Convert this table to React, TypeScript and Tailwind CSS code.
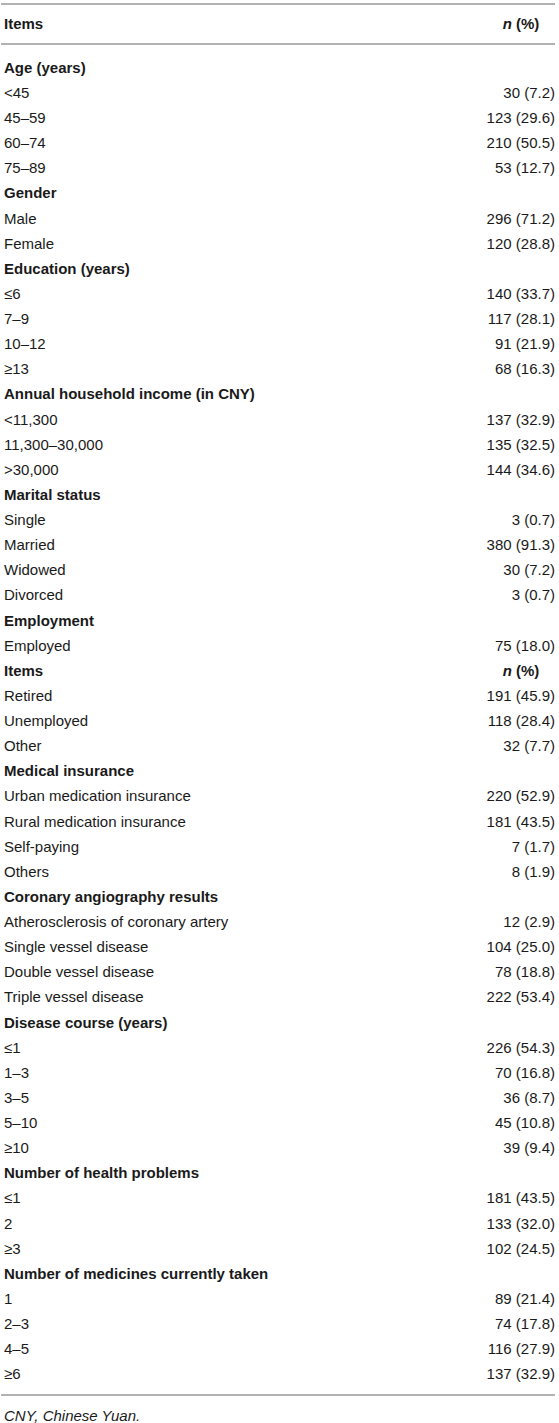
type Row = { label: string; value?: string; kind?: 'group' | 'header' };

const rows: Row[] = [
  { label: 'Age (years)', kind: 'group' },
  { label: '<45', value: '30 (7.2)' },
  { label: '45–59', value: '123 (29.6)' },
  { label: '60–74', value: '210 (50.5)' },
  { label: '75–89', value: '53 (12.7)' },
  { label: 'Gender', kind: 'group' },
  { label: 'Male', value: '296 (71.2)' },
  { label: 'Female', value: '120 (28.8)' },
  { label: 'Education (years)', kind: 'group' },
  { label: '≤6', value: '140 (33.7)' },
  { label: '7–9', value: '117 (28.1)' },
  { label: '10–12', value: '91 (21.9)' },
  { label: '≥13', value: '68 (16.3)' },
  { label: 'Annual household income (in CNY)', kind: 'group' },
  { label: '<11,300', value: '137 (32.9)' },
  { label: '11,300–30,000', value: '135 (32.5)' },
  { label: '>30,000', value: '144 (34.6)' },
  { label: 'Marital status', kind: 'group' },
  { label: 'Single', value: '3 (0.7)' },
  { label: 'Married', value: '380 (91.3)' },
  { label: 'Widowed', value: '30 (7.2)' },
  { label: 'Divorced', value: '3 (0.7)' },
  { label: 'Employment', kind: 'group' },
  { label: 'Employed', value: '75 (18.0)' },
  { label: 'Items', kind: 'header' },
  { label: 'Retired', value: '191 (45.9)' },
  { label: 'Unemployed', value: '118 (28.4)' },
  { label: 'Other', value: '32 (7.7)' },
  { label: 'Medical insurance', kind: 'group' },
  { label: 'Urban medication insurance', value: '220 (52.9)' },
  { label: 'Rural medication insurance', value: '181 (43.5)' },
  { label: 'Self-paying', value: '7 (1.7)' },
  { label: 'Others', value: '8 (1.9)' },
  { label: 'Coronary angiography results', kind: 'group' },
  { label: 'Atherosclerosis of coronary artery', value: '12 (2.9)' },
  { label: 'Single vessel disease', value: '104 (25.0)' },
  { label: 'Double vessel disease', value: '78 (18.8)' },
  { label: 'Triple vessel disease', value: '222 (53.4)' },
  { label: 'Disease course (years)', kind: 'group' },
  { label: '≤1', value: '226 (54.3)' },
  { label: '1–3', value: '70 (16.8)' },
  { label: '3–5', value: '36 (8.7)' },
  { label: '5–10', value: '45 (10.8)' },
  { label: '≥10', value: '39 (9.4)' },
  { label: 'Number of health problems', kind: 'group' },
  { label: '≤1', value: '181 (43.5)' },
  { label: '2', value: '133 (32.0)' },
  { label: '≥3', value: '102 (24.5)' },
  { label: 'Number of medicines currently taken', kind: 'group' },
  { label: '1', value: '89 (21.4)' },
  { label: '2–3', value: '74 (17.8)' },
  { label: '4–5', value: '116 (27.9)' },
  { label: '≥6', value: '137 (32.9)' },
];

function NHeader() {
  return (
    <span className="font-bold">
      <i>n</i> (%)
    </span>
  );
}

export default function App() {
  return (
    <div className="w-[559px] bg-white pt-[3px] text-[15px] text-[#1a1a1a] font-['Liberation_Sans',Arial,sans-serif]">
      <div className="ml-px w-[554px]">
        <div className="h-[2px] bg-[#b2b2b2]" />
        <div className="flex h-[38px] items-center pl-[3px]">
          <span className="flex-1 font-bold">Items</span>
          <span className="w-[68px] text-center">
            <NHeader />
          </span>
        </div>
        <div className="h-[2px] bg-[#b2b2b2]" />

        <div className="pt-[10.5px] pb-[6.6px]">
          {rows.map((r, i) => (
            <div key={i} className="flex h-[25.13px] items-center pl-[3px]">
              <span className={r.kind ? 'flex-1 font-bold' : 'flex-1'}>{r.label}</span>
              {r.kind === 'header' ? (
                <span className="w-[68px] text-center">
                  <NHeader />
                </span>
              ) : (
                <span className="text-right">{r.value}</span>
              )}
            </div>
          ))}
        </div>

        <div className="h-[2px] bg-[#b2b2b2]" />
        <div className="pl-[3px] pt-[11px] italic leading-[18px]">CNY, Chinese Yuan.</div>
      </div>
    </div>
  );
}
